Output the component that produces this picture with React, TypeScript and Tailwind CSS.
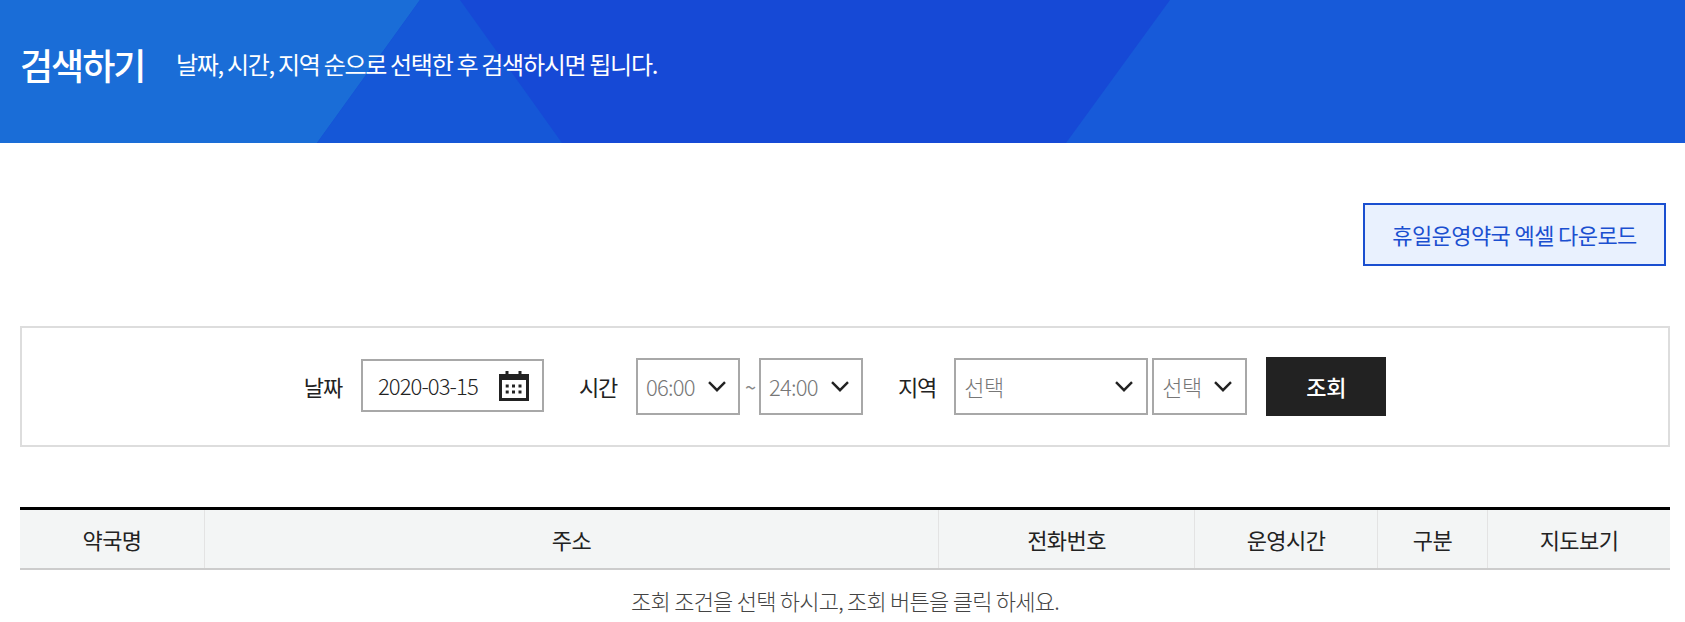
const font = { fontFamily: '"Noto Sans CJK KR", "Noto Sans", sans-serif' };

function Chevron() {
  return (
    <svg width="18" height="11" viewBox="0 0 18 11" className="shrink-0 text-[#222]" fill="none" stroke="currentColor" strokeWidth="2.4">
      <path d="M1 1.2 9 9.2 17 1.2" />
    </svg>
  );
}

function CalendarIcon() {
  return (
    <svg width="30" height="30" viewBox="0 0 30 30" className="shrink-0 text-[#222]" fill="currentColor">
      <rect x="6.5" y="0" width="3" height="6" />
      <rect x="19.5" y="0" width="3" height="6" />
      <path fillRule="evenodd" d="M0 3H30V30H0ZM3 9V27H27V9Z" />
      <rect x="6.7" y="13.5" width="3" height="3" />
      <rect x="13" y="13.5" width="3" height="3" />
      <rect x="19.5" y="13.5" width="3" height="3" />
      <rect x="6.7" y="19.5" width="3" height="3" />
      <rect x="13" y="19.5" width="3" height="3" />
      <rect x="19.5" y="19.5" width="3" height="3" />
    </svg>
  );
}

function SelectBox({ value, className }: { value: string; className: string }) {
  return (
    <div className={`flex h-[57px] items-center justify-between border-2 border-[#a8a8a8] pl-[8px] text-[22px] font-light text-[#777] ${className}`}>
      <span>{value}</span>
      <Chevron />
    </div>
  );
}

function Label({ children, className = '' }: { children: string; className?: string }) {
  return <span className={`text-[22px] tracking-[-1.2px] ${className}`}>{children}</span>;
}

const columns = [
  { label: '약국명', width: 'w-[185px]' },
  { label: '주소', width: 'w-[734px]' },
  { label: '전화번호', width: 'w-[256px]' },
  { label: '운영시간', width: 'w-[183px]' },
  { label: '구분', width: 'w-[110px]' },
  { label: '지도보기', width: 'flex-1' },
];

export default function App() {
  return (
    <div className="h-[622px] overflow-hidden bg-white" style={font}>
      <header className="relative flex h-[143px] items-center overflow-hidden bg-[#1649d6] pb-[16px] pl-[20px] text-white">
        <svg className="absolute inset-0" width="1685" height="143" viewBox="0 0 1685 143">
          <polygon points="0,0 420,0 317,143 0,143" fill="#1a6dd7" />
          <polygon points="420,0 460,0 562,143 317,143" fill="#1557d7" />
          <polygon points="1170,0 1685,0 1685,143 1066,143" fill="#175ad9" />
        </svg>
        <h1 className="relative w-[156px] text-[36px] font-medium tracking-[-2px]">검색하기</h1>
        <p className="relative text-[24px] tracking-[-1.3px]">날짜, 시간, 지역 순으로 선택한 후 검색하시면 됩니다.</p>
      </header>

      <main className="pl-[20px] pr-[15px]">
        <div className="flex justify-end pr-[4px] pt-[60px]">
          <a className="flex h-[63px] w-[303px] items-center justify-center border-2 border-[#1a4fd0] bg-[#e9f1fe] text-[22px] tracking-[-0.6px] text-[#1a4fd0]">
            휴일운영약국 엑셀 다운로드
          </a>
        </div>

        <section className="mt-[60px] flex h-[121px] items-center justify-center border-2 border-[#ddd] text-[#222]">
          <Label className="mr-[19px]">날짜</Label>
          <div className="mb-[2px] mr-[35px] flex h-[53px] w-[183px] items-center justify-between border-2 border-[#a8a8a8] pl-[15px] pr-[13px] text-[22px] font-light tracking-[-0.9px] text-[#222]">
            <span>2020-03-15</span>
            <CalendarIcon />
          </div>
          <Label className="mr-[19px]">시간</Label>
          <SelectBox value="06:00" className="w-[104px] pr-[12px] tracking-[-0.8px]" />
          <span className="ml-[5px] mr-[5px] w-[9px] text-[20px] text-[#888]">~</span>
          <SelectBox value="24:00" className="w-[104px] pr-[12px] tracking-[-0.8px]" />
          <Label className="ml-[35px] mr-[18px]">지역</Label>
          <SelectBox value="선택" className="w-[194px] pr-[13px] tracking-[-0.3px]" />
          <SelectBox value="선택" className="ml-[4px] w-[95px] pr-[13px] tracking-[-0.3px]" />
          <button className="ml-[19px] h-[59px] w-[120px] bg-[#222] text-[22px] font-medium tracking-[-0.3px] text-white">조회</button>
        </section>

        <div className="mt-[60px] flex h-[63px] border-t-[3px] border-b-2 border-t-black border-b-[#ccc] bg-[#f3f5f5] text-[22px] tracking-[-0.6px] text-[#222]">
          {columns.map((col, i) => (
            <div key={col.label} className={`flex items-center justify-center ${col.width} ${i < columns.length - 1 ? 'border-r border-[#e3e3e3]' : ''}`}>
              {col.label}
            </div>
          ))}
        </div>
        <p className="py-[14px] text-center text-[22px] font-light tracking-[-0.76px] text-[#444]">
          조회 조건을 선택 하시고, 조회 버튼을 클릭 하세요.
        </p>
      </main>
    </div>
  );
}
